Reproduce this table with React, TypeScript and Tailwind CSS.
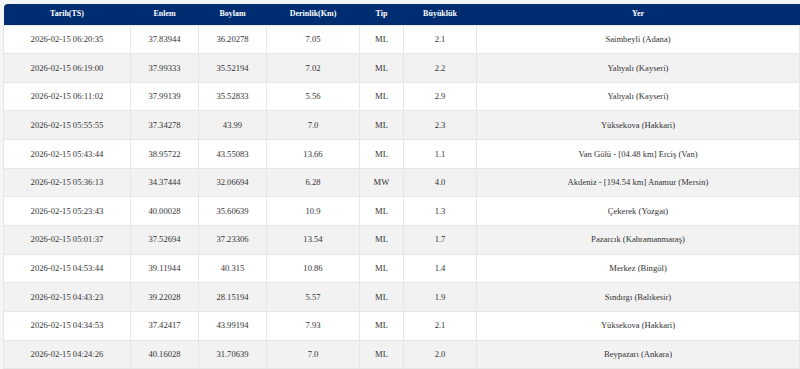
import React from 'react';

const ROWS = [
  ['2026-02-15 06:20:35', '37.83944', '36.20278', '7.05', 'ML', '2.1', 'Saimbeyli (Adana)'],
  ['2026-02-15 06:19:00', '37.99333', '35.52194', '7.02', 'ML', '2.2', 'Yahyalı (Kayseri)'],
  ['2026-02-15 06:11:02', '37.99139', '35.52833', '5.56', 'ML', '2.9', 'Yahyalı (Kayseri)'],
  ['2026-02-15 05:55:55', '37.34278', '43.99', '7.0', 'ML', '2.3', 'Yüksekova (Hakkari)'],
  ['2026-02-15 05:43:44', '38.95722', '43.55083', '13.66', 'ML', '1.1', 'Van Gölü - [04.48 km] Erciş (Van)'],
  ['2026-02-15 05:36:13', '34.37444', '32.06694', '6.28', 'MW', '4.0', 'Akdeniz - [194.54 km] Anamur (Mersin)'],
  ['2026-02-15 05:23:43', '40.00028', '35.60639', '10.9', 'ML', '1.3', 'Çekerek (Yozgat)'],
  ['2026-02-15 05:01:37', '37.52694', '37.23306', '13.54', 'ML', '1.7', 'Pazarcık (Kahramanmaraş)'],
  ['2026-02-15 04:53:44', '39.11944', '40.315', '10.86', 'ML', '1.4', 'Merkez (Bingöl)'],
  ['2026-02-15 04:43:23', '39.22028', '28.15194', '5.57', 'ML', '1.9', 'Sındırgı (Balıkesir)'],
  ['2026-02-15 04:34:53', '37.42417', '43.99194', '7.93', 'ML', '2.1', 'Yüksekova (Hakkari)'],
  ['2026-02-15 04:24:26', '40.16028', '31.70639', '7.0', 'ML', '2.0', 'Beypazarı (Ankara)'],
];

const HEADERS = ['Tarih(TS)', 'Enlem', 'Boylam', 'Derinlik(Km)', 'Tip', 'Büyüklük', 'Yer'];
const WIDTHS = ['w-[127px]', 'w-[68px]', 'w-[68px]', 'w-[93px]', 'w-[44px]', 'w-[73px]', ''];

export default function App() {
  return (
    <div className="h-[369px] overflow-hidden bg-[#f4f5f7] pl-[3px] pt-[4px] font-['Liberation_Serif','Times_New_Roman',serif]">
      <table className="w-full table-fixed border-collapse">
        <colgroup>
          {WIDTHS.map((w, i) => (
            <col key={i} className={w} />
          ))}
        </colgroup>
        <thead>
          <tr className="h-[21px] bg-[#002d72] border-b border-[#3b5a94]">
            {HEADERS.map((h, i) => (
              <th
                key={h}
                className={`p-0 text-center text-[8px] font-bold text-white ${i === 0 ? 'rounded-tl-[4px]' : ''}`}
              >
                {h}
              </th>
            ))}
          </tr>
        </thead>
        <tbody>
          {ROWS.map((row, r) => (
            <tr key={r} className={`h-[28.67px] ${r % 2 === 1 ? 'bg-[#f2f2f2]' : 'bg-white'}`}>
              {row.map((cell, c) => (
                <td
                  key={c}
                  className="p-0 text-center text-[8.6px] text-[#333] border border-[#e6e6e6] whitespace-nowrap"
                >
                  {cell}
                </td>
              ))}
            </tr>
          ))}
        </tbody>
      </table>
    </div>
  );
}
